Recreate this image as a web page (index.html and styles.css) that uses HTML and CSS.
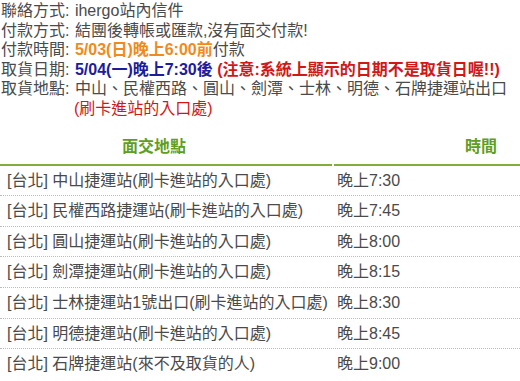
FILE: index.html
```html
<!DOCTYPE html>
<html>
<head>
<meta charset="utf-8">
<link rel="stylesheet" href="styles.css">
</head>
<body>
<div class="info">
  <div class="line"><span class="label">聯絡方式:</span> ihergo站內信件</div>
  <div class="line"><span class="label">付款方式:</span> 結團後轉帳或匯款,沒有面交付款!</div>
  <div class="line"><span class="label">付款時間:</span> <b class="orange">5/03(日)晚上6:00前</b>付款</div>
  <div class="line"><span class="label">取貨日期:</span> <b class="blue">5/04(一)晚上7:30後</b> <b class="red">(注意:系統上顯示的日期不是取貨日喔!!)</b></div>
  <div class="line"><span class="label">取貨地點:</span> 中山、民權西路、圓山、劍潭、士林、明德、石牌捷運站出口</div>
  <div class="line indent red-normal">(刷卡進站的入口處)</div>
</div>
<div class="table">
  <div class="row head">
    <div class="cell c1"><span class="h1">面交地點</span></div>
    <div class="cell c2"><span class="h2">時間</span></div>
  </div>
  <div class="row"><div class="cell c1">[台北] 中山捷運站(刷卡進站的入口處)</div><div class="cell c2">晚上7:30</div></div>
  <div class="row"><div class="cell c1">[台北] 民權西路捷運站(刷卡進站的入口處)</div><div class="cell c2">晚上7:45</div></div>
  <div class="row"><div class="cell c1">[台北] 圓山捷運站(刷卡進站的入口處)</div><div class="cell c2">晚上8:00</div></div>
  <div class="row"><div class="cell c1">[台北] 劍潭捷運站(刷卡進站的入口處)</div><div class="cell c2">晚上8:15</div></div>
  <div class="row"><div class="cell c1">[台北] 士林捷運站1號出口(刷卡進站的入口處)</div><div class="cell c2">晚上8:30</div></div>
  <div class="row"><div class="cell c1">[台北] 明德捷運站(刷卡進站的入口處)</div><div class="cell c2">晚上8:45</div></div>
  <div class="row last"><div class="cell c1">[台北] 石牌捷運站(來不及取貨的人)</div><div class="cell c2">晚上9:00</div></div>
</div>
</body>
</html>
```

FILE: styles.css
```css
html, body {
  margin: 0;
  padding: 0;
  background: #fff;
}
body {
  font-family: "Liberation Sans", "Noto Sans CJK TC", sans-serif;
  font-size: 16px;
  color: #4a4a4a;
  width: 520px;
  overflow: hidden;
}
.info {
  padding: 1px 0 0 1px;
}
.line {
  line-height: 19.5px;
  height: 19.5px;
  white-space: nowrap;
}
.label {
  margin-right: 1px;
}
.indent {
  padding-left: 73px;
}
.orange { color: #f08a1c; }
.blue { color: #1c1c9c; }
.red { color: #d01818; }
.red-normal { color: #d01818; }
.table {
  margin-top: 11px;
}
.row {
  display: flex;
  border-bottom: 1px dotted #bdbdbd;
}
.row.last {
  border-bottom: none;
}
.cell {
  line-height: 19.6px;
  padding: 5px 0;
  white-space: nowrap;
}
.c1 {
  width: 333px;
  padding-left: 7px;
  box-sizing: border-box;
}
.c2 {
  flex: 1;
  padding-left: 4px;
}
.row.head {
  border-bottom: none;
  gap: 2px;
}
.row.head .cell {
  padding-top: 8px;
  padding-bottom: 7px;
  border-bottom: 2px solid #7fae3c;
  font-weight: bold;
  color: #5f9e1e;
}
.row.head .c1 {
  width: 332px;
  padding-left: 122px;
}
.row.head .c2 {
  padding-left: 131px;
}
```
